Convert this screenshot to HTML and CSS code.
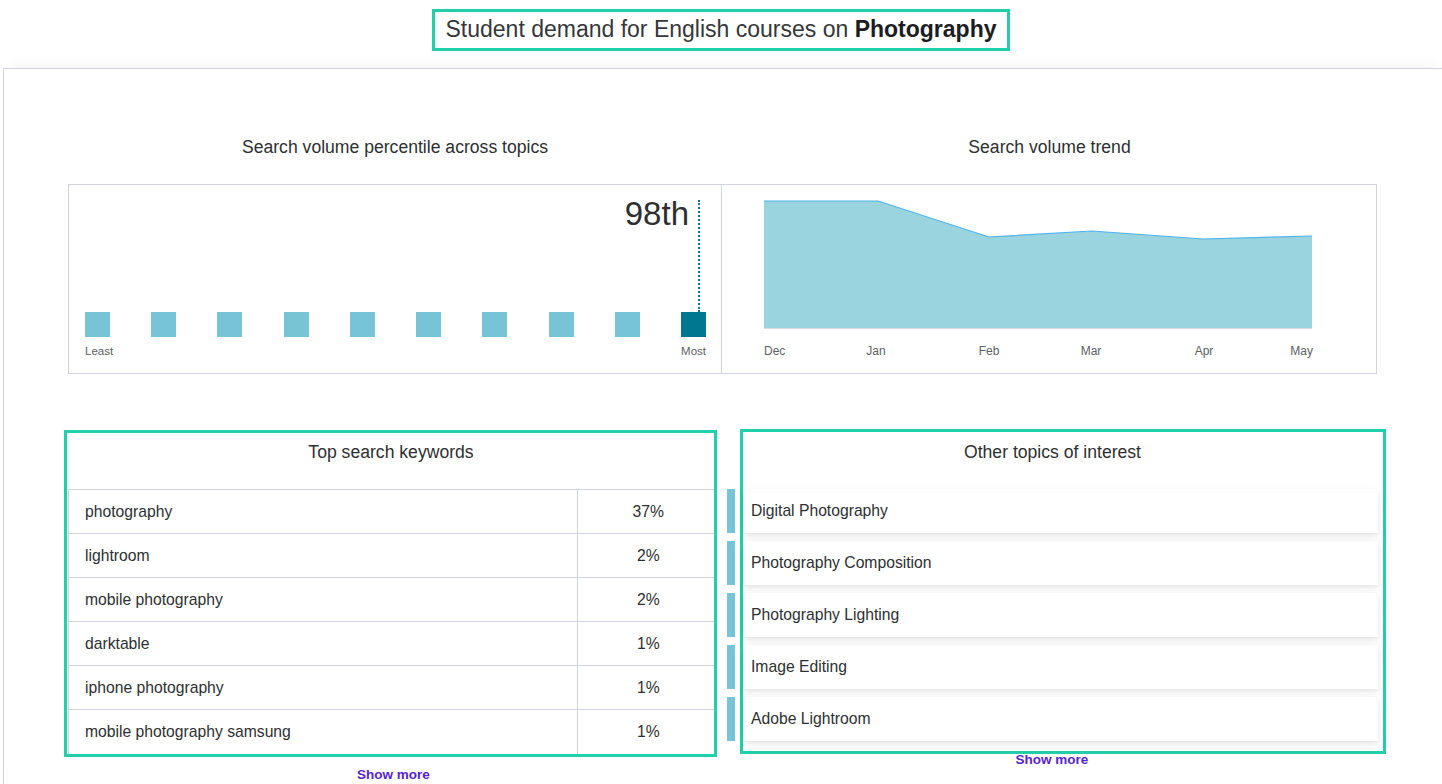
FILE: index.html
```html
<!DOCTYPE html>
<html lang="en">
<head>
<meta charset="utf-8">
<title>Student demand for English courses on Photography</title>
<link rel="stylesheet" href="styles.css">
</head>
<body>
<header class="page-head">
  <h1 class="page-title">Student demand for English courses on <strong>Photography</strong></h1>
</header>

<main class="panel">
  <section class="charts">
    <div class="chart-col">
      <h2 class="chart-title">Search volume percentile across topics</h2>
      <div class="chart-box percentile">
        <div class="marker-area">
          <span class="marker-label">98th</span>
          <span class="marker-line"></span>
        </div>
        <div class="squares">
          <span class="sq"></span><span class="sq"></span><span class="sq"></span><span class="sq"></span><span class="sq"></span>
          <span class="sq"></span><span class="sq"></span><span class="sq"></span><span class="sq"></span><span class="sq sq-active"></span>
        </div>
        <div class="scale-labels"><span>Least</span><span>Most</span></div>
      </div>
    </div>
    <div class="chart-col">
      <h2 class="chart-title">Search volume trend</h2>
      <div class="chart-box trend">
        <svg class="trend-svg" width="654" height="187" viewBox="0 0 654 187">
          <polygon class="area" points="42,16 156,16 267,52 370,46 481,54 590,51 590,143 42,143"></polygon>
          <polyline class="area-line" points="42,16 156,16 267,52 370,46 481,54 590,51"></polyline>
          <line class="base-line" x1="42" y1="143.5" x2="590" y2="143.5"></line>
          <text class="axis" x="42" y="170" text-anchor="start">Dec</text>
          <text class="axis" x="154" y="170" text-anchor="middle">Jan</text>
          <text class="axis" x="267" y="170" text-anchor="middle">Feb</text>
          <text class="axis" x="369" y="170" text-anchor="middle">Mar</text>
          <text class="axis" x="482" y="170" text-anchor="middle">Apr</text>
          <text class="axis" x="591" y="170" text-anchor="end">May</text>
        </svg>
      </div>
    </div>
  </section>

  <section class="lists">
    <div class="list-col keywords-col">
      <div class="hl-box keywords">
        <h2 class="list-title">Top search keywords</h2>
        <table class="kw-table">
          <tr><td class="kw">photography</td><td class="pct">37%</td></tr>
          <tr><td class="kw">lightroom</td><td class="pct">2%</td></tr>
          <tr><td class="kw">mobile photography</td><td class="pct">2%</td></tr>
          <tr><td class="kw">darktable</td><td class="pct">1%</td></tr>
          <tr><td class="kw">iphone photography</td><td class="pct">1%</td></tr>
          <tr><td class="kw">mobile photography samsung</td><td class="pct">1%</td></tr>
        </table>
      </div>
      <a class="show-more show-more-left" href="#">Show more</a>
    </div>

    <div class="list-col topics-col">
      <div class="hl-box topics">
        <h2 class="list-title topics-title">Other topics of interest</h2>
        <ul class="topic-list">
          <li class="topic">Digital Photography</li>
          <li class="topic">Photography Composition</li>
          <li class="topic">Photography Lighting</li>
          <li class="topic">Image Editing</li>
          <li class="topic">Adobe Lightroom</li>
        </ul>
      </div>
      <a class="show-more show-more-right" href="#">Show more</a>
    </div>
  </section>
</main>
</body>
</html>
```

FILE: styles.css
```css
* { box-sizing: border-box; }

html, body {
  margin: 0;
  padding: 0;
  background: #ffffff;
  overflow: hidden;
}

body {
  font-family: "Liberation Sans", Arial, sans-serif;
  color: #2d2f31;
  width: 1442px;
  height: 784px;
}

.page-head {
  text-align: center;
  padding-top: 9px;
}

.page-title {
  display: inline-block;
  margin: 0;
  border: 3px solid #20d0ab;
  padding: 3px 11px 4px 11px;
  font-size: 23px;
  line-height: 29px;
  font-weight: 400;
  color: #35373a;
}

.page-title strong {
  font-weight: 700;
  color: #1c1d1f;
}

.panel {
  margin: 17px 0 0 3px;
  border-top: 1px solid #d1d2e0;
  border-left: 1px solid #d1d2e0;
  box-shadow: 0 -8px 14px -6px rgba(0, 0, 0, 0.05);
  height: 716px;
}

/* ---------- charts ---------- */
.charts {
  display: grid;
  grid-template-columns: 654px 655px;
  margin-left: 64px;
  padding-top: 68px;
}

.chart-title {
  margin: 0 0 27px 0;
  text-align: center;
  font-size: 17.6px;
  line-height: 20px;
  font-weight: 400;
  color: #2d2f31;
}

.chart-box {
  height: 190px;
  border: 1px solid #d1d2e0;
}

.trend {
  border-left: none;
}

.trend-svg {
  display: block;
}

.area { fill: #99d4df; }
.area-line { fill: none; stroke: #4db3ee; stroke-width: 1.2; }
.base-line { stroke: #d7dbe0; stroke-width: 1; }
.axis {
  font-family: "Liberation Sans", Arial, sans-serif;
  font-size: 12px;
  fill: #5c5f63;
}

/* percentile */
.percentile {
  display: flex;
  flex-direction: column;
  padding: 0 15px 0 16px;
}

.marker-area {
  height: 127px;
  display: flex;
  justify-content: flex-end;
  align-items: flex-start;
  padding-top: 12px;
}

.marker-label {
  font-size: 33px;
  line-height: 34px;
  font-weight: 400;
  color: #2d2f31;
  margin-right: 9px;
}

.marker-line {
  width: 0;
  height: 112px;
  margin-top: 3px;
  margin-right: 6px;
  border-left: 2px dotted #007791;
}

.squares {
  display: flex;
  justify-content: space-between;
}

.sq {
  width: 25px;
  height: 25px;
  background: #76c4d6;
}

.sq-active {
  background: #007791;
}

.scale-labels {
  display: flex;
  justify-content: space-between;
  margin-top: 7px;
  font-size: 11.5px;
  line-height: 14px;
  color: #5c5f63;
}

/* ---------- lists ---------- */
.lists {
  display: flex;
  align-items: flex-start;
  margin-top: 56px;
  margin-left: 60px;
}

.list-col {
  display: flex;
  flex-direction: column;
  align-items: center;
}

.hl-box {
  border: 3px solid #20d0ab;
  background: #ffffff;
}

.keywords {
  width: 653px;
  padding-left: 1px;
}

.list-title {
  margin: 0;
  height: 56px;
  padding-top: 9px;
  text-align: center;
  font-size: 17.6px;
  line-height: 20px;
  font-weight: 400;
  color: #2d2f31;
}

.kw-table {
  width: 100%;
  border-collapse: collapse;
  border-left: 1px solid #d1d2e0;
}

.kw-table td {
  height: 44px;
  border-top: 1px solid #d1d2e0;
  padding: 0;
  font-size: 15.7px;
  color: #2d2f31;
}

.kw {
  padding-left: 16px !important;
  border-right: 1px solid #d1d2e0;
}

.kw-table .pct {
  width: 137px;
  padding-left: 5px;
  text-align: center;
}

.show-more {
  font-size: 13.5px;
  line-height: 16px;
  font-weight: 700;
  color: #5624d0;
  text-decoration: none;
}

.show-more-left {
  margin-top: 10px;
  margin-left: 6px;
}

.topics-col {
  margin-top: -1px;
  margin-left: 10px;
  padding-left: 13px;
}

.topics {
  width: 646px;
  padding: 0 5px 10px 1px;
}

.topics-title {
  height: 57px;
  padding-top: 10px;
  margin-left: -17px;
}

.topic-list {
  list-style: none;
  margin: 0;
  padding: 0;
  display: flex;
  flex-direction: column;
  gap: 8px;
}

.topic {
  position: relative;
  height: 44px;
  display: flex;
  align-items: center;
  padding-left: 7px;
  padding-bottom: 1px;
  font-size: 15.7px;
  color: #2d2f31;
  background: #ffffff;
  box-shadow: 0 2px 4px rgba(0, 0, 0, 0.07), 0 4px 12px rgba(0, 0, 0, 0.06);
}

.topic::before {
  content: "";
  position: absolute;
  left: -17px;
  top: 0;
  width: 8px;
  height: 44px;
  background: #76c4d6;
}

.show-more-right {
  margin-top: -1px;
  margin-right: 22px;
  line-height: 14px;
}
```
